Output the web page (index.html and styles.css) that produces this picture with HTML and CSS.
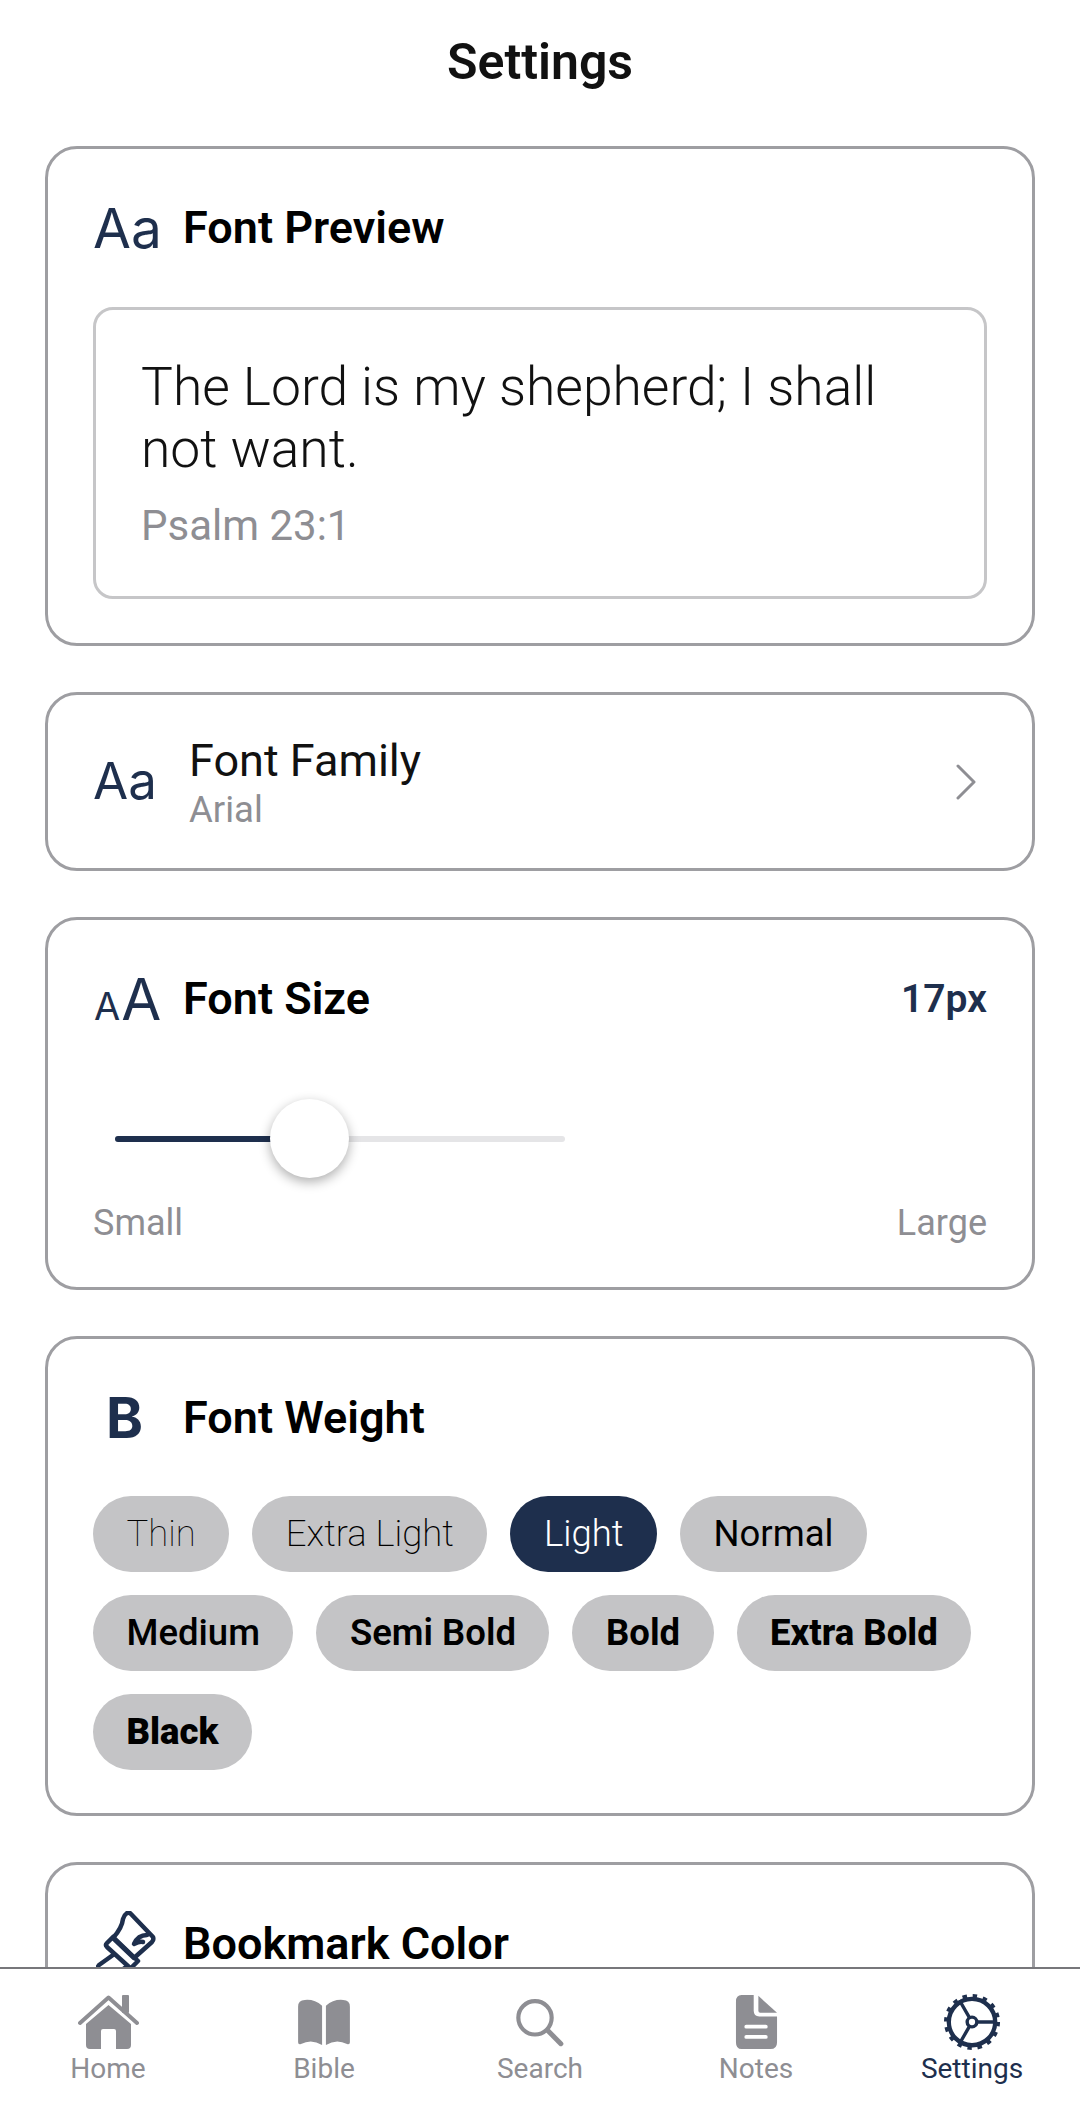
FILE: index.html
```html
<!DOCTYPE html>
<html lang="en">
  <head>
    <meta charset="UTF-8" />
    <meta name="viewport" content="width=device-width, initial-scale=1.0" />
    <title>Settings</title>
    <link rel="stylesheet" href="styles.css">
  </head>
  <body>
    <div class="app">
      <header class="top-title">Settings</header>

      <main class="content">
        <!-- preview -->
        <section class="card card-preview">
          <div class="card-head">
            <span class="head-icon icon-aa">Aa</span>
            <h2>Font Preview</h2>
          </div>
          <div class="preview-box">
            <p class="verse">The Lord is my shepherd; I shall not want.</p>
            <p class="verse-ref">Psalm 23:1</p>
          </div>
        </section>

        <!-- family -->
        <section class="card card-family">
          <span class="family-icon icon-aa">Aa</span>
          <div class="family-text">
            <div class="family-name">Font Family</div>
            <div class="family-value">Arial</div>
          </div>
          <svg class="chevron" width="22" height="36" viewBox="0 0 22 36">
            <path d="M3 2 L19 18 L3 34" fill="none" stroke="#8e8e93" stroke-width="3" stroke-linecap="round" stroke-linejoin="round" />
          </svg>
        </section>

        <!-- size -->
        <section class="card card-size">
          <div class="card-head">
            <span class="head-icon icon-size"><span class="small-a">A</span><span class="big-a">A</span></span>
            <h2>Font Size</h2>
            <span class="size-value">17px</span>
          </div>
          <div class="slider">
            <div class="slider-track">
              <div class="slider-fill" style="width: 195px"></div>
            </div>
            <div class="slider-thumb"></div>
          </div>
          <div class="slider-labels">
            <span>Small</span>
            <span>Large</span>
          </div>
        </section>

        <!-- weight -->
        <section class="card card-weight">
          <div class="card-head">
            <span class="head-icon icon-bold">B</span>
            <h2>Font Weight</h2>
          </div>
          <div class="chips">
            <span class="chip w100">Thin</span>
            <span class="chip w200">Extra Light</span>
            <span class="chip w300 selected">Light</span>
            <span class="chip w400">Normal</span>
            <span class="chip w500">Medium</span>
            <span class="chip w600">Semi Bold</span>
            <span class="chip w700">Bold</span>
            <span class="chip w800">Extra Bold</span>
            <span class="chip w900">Black</span>
          </div>
        </section>

        <!-- bookmark color, cut off by the tab bar -->
        <section class="card card-bookmark">
          <div class="card-head">
            <svg class="brush" width="62" height="70" viewBox="0 0 62 70">
              <g fill="none" stroke="#1e2f4d" stroke-width="4.5" stroke-linecap="round" stroke-linejoin="round">
                <path d="M31 2 Q33 1 35 3 L57 26 Q58 29 56 31 L38 47 L17 27 Q26 17 27 8 Q28 4 31 2 Z" />
                <path d="M51 24 Q42 24 38 33 Q44 30 47 31" />
                <path d="M11 32 L17 26 L42 50 L36 56 Q34 57 33 56 L11 36 Q9 34 11 32 Z" />
                <path d="M17 44 L3 54 Q0 58 3 62 L14 70 M30 56 L22 62" />
              </g>
            </svg>
            <h2>Bookmark Color</h2>
          </div>
        </section>
      </main>

      <nav class="tabbar">
        <div class="tab">
          <div class="tab-icon">
            <svg width="61" height="55" viewBox="0 0 61 55" fill="#8e8e93">
              <path d="M8 29 L30.5 10 L53 29 V50 Q53 54 49 54 H38 V36 Q38 34 36 34 H25 Q23 34 23 36 V54 H12 Q8 54 8 50 Z" />
              <path d="M2 28 L30.5 2.5 L59 28" fill="none" stroke="#8e8e93" stroke-width="4" stroke-linecap="round" stroke-linejoin="round" />
              <rect x="44" y="0" width="7" height="18" rx="1" />
            </svg>
          </div>
          <span>Home</span>
        </div>
        <div class="tab">
          <div class="tab-icon">
            <svg width="54" height="47" viewBox="0 5 56 49" fill="#8e8e93">
              <path d="M26 12 Q18 5 8 6 Q1 6 1 13 V50 Q1 53 4 52 Q15 46 26 53 Z" />
              <path d="M30 12 Q38 5 48 6 Q55 6 55 13 V50 Q55 53 52 52 Q41 46 30 53 Z" />
            </svg>
          </div>
          <span>Bible</span>
        </div>
        <div class="tab">
          <div class="tab-icon">
            <svg width="50" height="50" viewBox="0 0 60 60">
              <circle cx="24" cy="25" r="20" fill="none" stroke="#8e8e93" stroke-width="5" />
              <path d="M39 40 L55 56" fill="none" stroke="#8e8e93" stroke-width="6" stroke-linecap="round" />
            </svg>
          </div>
          <span>Search</span>
        </div>
        <div class="tab">
          <div class="tab-icon">
            <svg width="43" height="56" viewBox="0 0 46 60" fill="#8e8e93">
              <path d="M7 1 H20 V18 Q20 24 26 24 H45 V52 Q45 59 38 59 H7 Q1 59 1 52 V8 Q1 1 7 1 Z" />
              <path d="M25 2 L45 20 H27 Q25 20 25 18 Z" />
              <rect x="10" y="33" width="25" height="4" rx="2" fill="#fff" />
              <rect x="10" y="44" width="25" height="4" rx="2" fill="#fff" />
            </svg>
          </div>
          <span>Notes</span>
        </div>
        <div class="tab active">
          <div class="tab-icon">
            <svg width="58" height="58" viewBox="0 0 60 60" fill="none" stroke="#1e2f4d">
              <circle cx="30" cy="30" r="24" stroke-width="4.5" />
              <circle cx="30" cy="30" r="26.5" stroke-width="5" stroke-dasharray="4.5 5.9" />
              <circle cx="30" cy="30" r="5" stroke-width="3.5" />
              <path d="M35 30 H54 M27.5 25.7 L17 7.5 M27.5 34.3 L17 52.5" stroke-width="3.5" />
            </svg>
          </div>
          <span>Settings</span>
        </div>
      </nav>
    </div>
  </body>
</html>
```

FILE: styles.css
```css
* {
  box-sizing: border-box;
}
html,
body {
  margin: 0;
  padding: 0;
}
body {
  background: #fff;
  color: #000;
  font-family: Roboto, "Noto Sans", sans-serif;
}
h2,
p {
  margin: 0;
}

.app {
  display: flex;
  flex-direction: column;
  width: 1080px;
  height: 2109px;
  overflow: hidden;
}

.top-title {
  flex: none;
  height: 125px;
  line-height: 124px;
  text-align: center;
  font-size: 50px;
  font-weight: 600;
  color: #111;
}

.content {
  flex: 1;
  min-height: 0;
  overflow: hidden;
  padding: 21px 45px 0;
  display: flex;
  flex-direction: column;
  gap: 46px;
}

.card {
  flex: none;
  border: 3px solid #9e9ea2;
  border-radius: 32px;
  background: #fff;
  padding: 0 45px;
}

.card-head {
  display: flex;
  align-items: center;
  height: 62px;
}
.card-head h2 {
  font-size: 45px;
  font-weight: 600;
  line-height: 62px;
}
.head-icon {
  flex: none;
  width: 90px;
  color: #1e2f4d;
}

.icon-aa {
  font-family: Inter, Roboto, sans-serif;
  font-weight: 400;
  color: #1e2f4d;
}
.head-icon.icon-aa {
  font-size: 55px;
}

/* preview */
.card-preview {
  height: 500px;
  padding-top: 48px;
}
.preview-box {
  margin-top: 48px;
  height: 292px;
  border: 3px solid #c6c6c8;
  border-radius: 20px;
  padding: 46px 45px 0;
}
.verse {
  font-size: 53.4px;
  font-weight: 300;
  line-height: 62px;
  color: #111;
}
.verse-ref {
  margin-top: 21px;
  font-size: 42px;
  font-weight: 400;
  line-height: 50px;
  color: #8e8e93;
}

/* family */
.card-family {
  height: 179px;
  display: flex;
  align-items: center;
}
.family-icon {
  flex: none;
  width: 96px;
  margin-top: -2px;
  font-size: 51px;
}
.family-text {
  flex: 1;
  margin-top: 4px;
}
.family-name {
  font-size: 45px;
  line-height: 50px;
  color: #111;
}
.family-value {
  margin-top: 2px;
  font-size: 36.5px;
  line-height: 44px;
  color: #8e8e93;
}
.chevron {
  flex: none;
  margin-right: 10px;
}

/* size */
.card-size {
  height: 373px;
  padding-top: 48px;
}
.icon-size {
  display: flex;
  align-items: baseline;
  font-family: Inter, Roboto, sans-serif;
  font-weight: 400;
}
.small-a {
  font-size: 38px;
  margin-left: 1px;
}
.big-a {
  font-size: 58px;
  margin-left: 1px;
}
.size-value {
  margin-left: auto;
  font-size: 39px;
  font-weight: 600;
  color: #1e2f4d;
}
.slider {
  position: relative;
  width: 450px;
  height: 80px;
  margin: 69px 0 0 22px;
  display: flex;
  align-items: center;
}
.slider-track {
  width: 100%;
  height: 6px;
  border-radius: 3px;
  background: #e5e5e7;
}
.slider-fill {
  height: 6px;
  border-radius: 3px;
  background: #1e2f4d;
}
.slider-thumb {
  position: absolute;
  left: 155px;
  top: 0;
  width: 79px;
  height: 79px;
  border-radius: 50%;
  background: #fff;
  box-shadow: 0 4px 12px rgba(0, 0, 0, 0.32);
}
.slider-labels {
  display: flex;
  justify-content: space-between;
  margin-top: 22px;
  font-size: 36px;
  line-height: 44px;
  color: #8e8e93;
}

/* weight */
.card-weight {
  height: 480px;
  padding-top: 48px;
}
.icon-bold {
  font-family: Inter, Roboto, sans-serif;
  font-weight: 700;
  font-size: 56px;
  line-height: 62px;
  padding-left: 13px;
}
.chips {
  display: flex;
  flex-wrap: wrap;
  gap: 23px;
  margin-top: 47px;
}
.chip {
  height: 76px;
  line-height: 76px;
  padding: 0 33.5px;
  border-radius: 38px;
  background: #c4c4c6;
  font-size: 36.5px;
  color: #000;
}
.chip.selected {
  background: #1e2f4d;
  color: #fff;
}
.w100 { font-weight: 100; }
.w200 { font-weight: 200; }
.w300 { font-weight: 300; }
.w400 { font-weight: 400; }
.w500 { font-weight: 500; }
.w600 { font-weight: 600; }
.w700 { font-weight: 700; }
.w800 { font-weight: 800; }
.w900 { font-weight: 900; }

/* bookmark, runs under the tab bar */
.card-bookmark {
  height: 400px;
  padding-top: 48px;
}
.card-bookmark .card-head h2 {
  line-height: 44px;
}
.brush {
  flex: none;
  margin: 4px 25px 0 3px;
}

/* tabs */
.tabbar {
  flex: none;
  height: 142px;
  display: flex;
  background: #fff;
  border-top: 2px solid #77777b;
  padding-top: 24px;
}
.tab {
  flex: 1;
  display: flex;
  flex-direction: column;
  align-items: center;
  color: #8e8e93;
  font-size: 28px;
  line-height: 36px;
}
.tab-icon {
  height: 58px;
  display: flex;
  align-items: center;
}
.tab-icon svg {
  display: block;
}
.tab.active {
  color: #1e2f4d;
}
```
